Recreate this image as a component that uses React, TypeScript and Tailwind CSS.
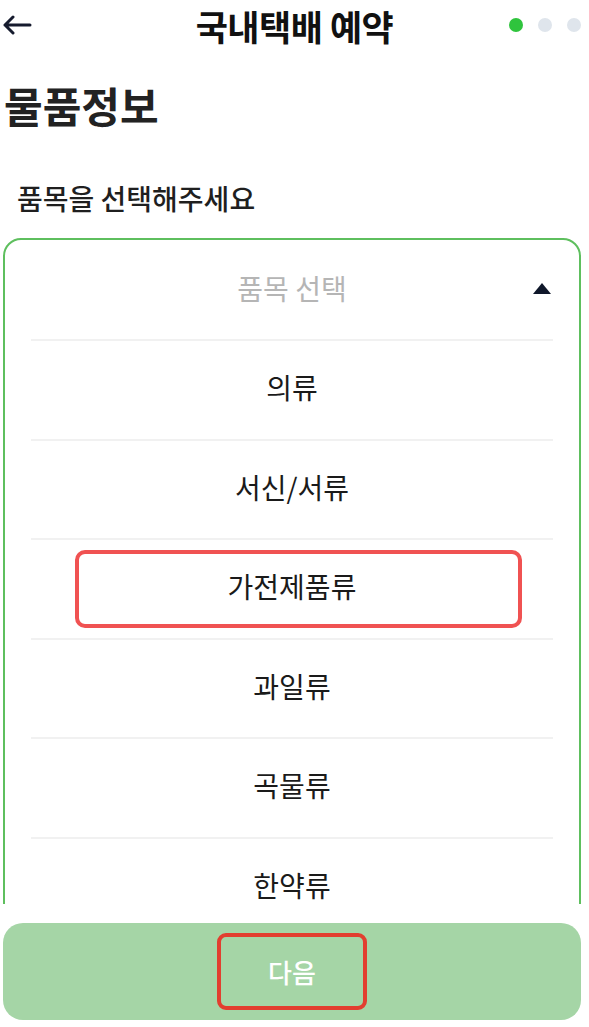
import React from "react";

const items = ["의류", "서신/서류", "가전제품류", "과일류", "곡물류", "한약류"];

export default function App() {
  return (
    <div
      className="relative h-[1027px] w-[589px] overflow-hidden bg-white text-[#1c1c1c]"
      style={{ fontFamily: '"Noto Sans CJK KR", "Noto Sans", sans-serif' }}
    >
      {/* Header */}
      <div className="grid h-[50px] grid-cols-[1fr_auto_1fr] items-center">
        <div className="flex items-center pl-[2px]">
          <svg width="30" height="20" viewBox="0 0 30 20" fill="none">
            <path d="M28 10H3M11 2L3 10l8 8" stroke="#161b2e" strokeWidth="3" strokeLinecap="round" strokeLinejoin="round" />
          </svg>
        </div>
        <div className="text-[35px] font-bold leading-none tracking-[-0.5px] text-[#111]">국내택배 예약</div>
        <div className="flex items-center justify-end gap-[15px] pr-[8px]">
          <span className="h-[14px] w-[14px] rounded-full bg-[#2fc43d]" />
          <span className="h-[14px] w-[14px] rounded-full bg-[#dfe5ec]" />
          <span className="h-[14px] w-[14px] rounded-full bg-[#dfe5ec]" />
        </div>
      </div>

      <h1 className="mt-[34px] pl-[4px] text-[42px] font-semibold leading-[42px] text-[#222]">물품정보</h1>

      <p className="mt-[59px] pl-[17px] text-[28px] font-medium leading-[27px] text-[#1f1f1f]">품목을 선택해주세요</p>

      {/* Dropdown */}
      <div className="mt-[26px] h-[666px] overflow-hidden pl-[3px] pr-[8px]">
        <div className="h-[720px] rounded-[18px] border-2 border-[#5ebf5e] px-[26px]">
          <div className="relative flex h-[99px] items-center justify-center pb-[4px]">
            <span className="text-[28px] leading-none text-[#b5b5b5]">품목 선택</span>
            <svg className="absolute right-[2px] top-[43px]" width="18" height="11" viewBox="0 0 18 11">
              <path d="M9 0L18 11H0z" fill="#0f172a" />
            </svg>
          </div>
          {items.map((it) => (
            <div key={it}>
              <div className="h-[2px] bg-[#f1f1f1]" />
              <div className="relative flex h-[97.5px] items-center justify-center pb-[5px]">
                <span className="text-[28px] leading-none text-[#1a1a1a]">{it}</span>
                {it === "가전제품류" && (
                  <div className="absolute left-[44px] top-[10px] h-[78px] w-[447px] rounded-[10px] border-[4px] border-[#f05252]" />
                )}
              </div>
            </div>
          ))}
        </div>
      </div>

      {/* Bottom button */}
      <div className="mt-[19px] pl-[3px] pr-[8px]">
        <div className="relative flex h-[97px] items-center justify-center rounded-[20px] bg-[#a5d5a6]">
          <div className="flex h-[77px] w-[150px] items-center justify-center rounded-[9px] border-[4px] border-[#e23e2f]">
            <span className="text-[26px] font-medium leading-none text-white">다음</span>
          </div>
        </div>
      </div>
    </div>
  );
}
